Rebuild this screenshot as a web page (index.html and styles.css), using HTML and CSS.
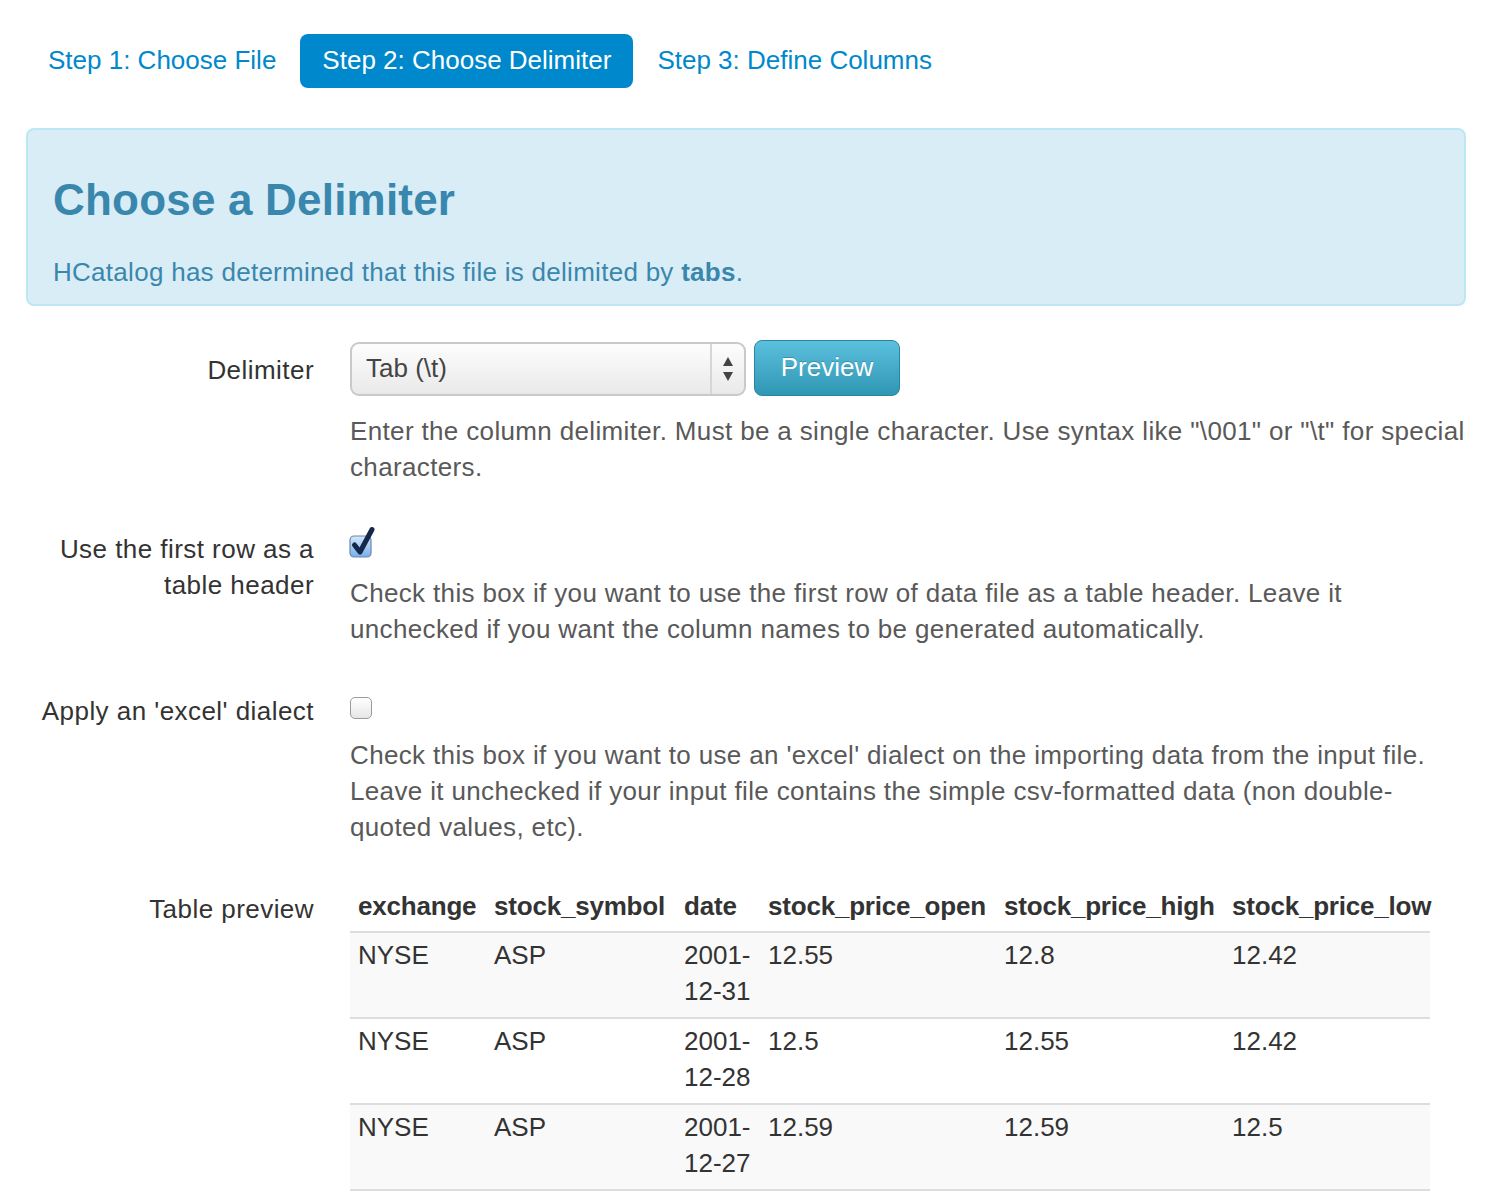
FILE: index.html
```html
<!DOCTYPE html>
<html lang="en">
<head>
<meta charset="utf-8">
<title>Choose a Delimiter</title>
<link rel="stylesheet" href="styles.css">
</head>
<body>
<div class="page">
  <ul class="steps">
    <li><a class="step">Step 1: Choose File</a></li>
    <li><a class="step active">Step 2: Choose Delimiter</a></li>
    <li><a class="step">Step 3: Define Columns</a></li>
  </ul>

  <div class="alert">
    <h1>Choose a Delimiter</h1>
    <p>HCatalog has determined that this file is delimited by <b>tabs</b>.</p>
  </div>

  <div class="form">
    <div class="group">
      <div class="label">Delimiter</div>
      <div class="controls">
        <div class="inline">
          <div class="select">
            <span class="select-text">Tab (\t)</span>
            <span class="arrows">
              <svg width="14" height="28" viewBox="0 0 14 28"><path d="M7 2 L12 11 L2 11 Z" fill="#444"/><path d="M2 17 L12 17 L7 26 Z" fill="#444"/></svg>
            </span>
          </div>
          <button class="btn">Preview</button>
        </div>
        <p class="help">Enter the column delimiter. Must be a single character. Use syntax like "\001" or "\t" for special characters.</p>
      </div>
    </div>

    <div class="group">
      <div class="label">Use the first row as a table header</div>
      <div class="controls">
        <div class="check-line">
          <svg class="checkbox checked" width="30" height="34" viewBox="0 0 30 34">
            <defs>
              <linearGradient id="cb" x1="0" y1="0" x2="0" y2="1">
                <stop offset="0" stop-color="#d3e7fc"/>
                <stop offset="1" stop-color="#78aeea"/>
              </linearGradient>
            </defs>
            <rect x="1" y="10" width="21" height="21" rx="4" fill="url(#cb)" stroke="#6a88ae" stroke-width="1.2"/>
            <path d="M5.5 19 L11 26 L23 3.5" fill="none" stroke="#13284a" stroke-width="5" stroke-linecap="round" stroke-linejoin="round"/>
          </svg>
        </div>
        <p class="help">Check this box if you want to use the first row of data file as a table header. Leave it unchecked if you want the column names to be generated automatically.</p>
      </div>
    </div>

    <div class="group">
      <div class="label">Apply an 'excel' dialect</div>
      <div class="controls">
        <div class="check-line">
          <span class="checkbox unchecked"></span>
        </div>
        <p class="help">Check this box if you want to use an 'excel' dialect on the importing data from the input file. Leave it unchecked if your input file contains the simple csv-formatted data (non double-quoted values, etc).</p>
      </div>
    </div>

    <div class="group">
      <div class="label">Table preview</div>
      <div class="controls">
        <table class="preview">
          <colgroup>
            <col class="c1"><col class="c2"><col class="c3"><col class="c4"><col class="c5"><col class="c6">
          </colgroup>
          <thead>
            <tr><th>exchange</th><th>stock_symbol</th><th>date</th><th>stock_price_open</th><th>stock_price_high</th><th>stock_price_low</th></tr>
          </thead>
          <tbody>
            <tr><td>NYSE</td><td>ASP</td><td>2001-12-31</td><td>12.55</td><td>12.8</td><td>12.42</td></tr>
            <tr><td>NYSE</td><td>ASP</td><td>2001-12-28</td><td>12.5</td><td>12.55</td><td>12.42</td></tr>
            <tr><td>NYSE</td><td>ASP</td><td>2001-12-27</td><td>12.59</td><td>12.59</td><td>12.5</td></tr>
          </tbody>
        </table>
      </div>
    </div>
  </div>
</div>
</body>
</html>
```

FILE: styles.css
```css
* { box-sizing: border-box; }
html, body { margin: 0; padding: 0; background: #fff; }
body {
  font-family: "Liberation Sans", Arial, sans-serif;
  font-size: 26px;
  line-height: 36px;
  color: #333;
}
.page {
  padding: 34px 26px 0 26px;
  width: 1492px;
  overflow: hidden;
}

/* steps */
.steps {
  list-style: none;
  margin: 0 0 40px 0;
  padding: 0;
  display: flex;
  gap: 2px;
}
.step {
  display: block;
  padding: 8px 22px 10px 22px;
  line-height: 36px;
  color: #0088cc;
  border-radius: 8px;
  text-decoration: none;
}
.step.active {
  background: #0088cc;
  color: #fff;
}

/* alert */
.alert {
  background: #d9edf7;
  border: 2px solid #bce8f1;
  border-radius: 8px;
  color: #3a87ad;
  padding: 44px 24px 14px 25px;
  margin-bottom: 36px;
}
.alert h1 {
  margin: 0 0 28px 0;
  font-size: 44px;
  line-height: 52px;
  font-weight: bold;
  letter-spacing: 0.2px;
}
.alert p { margin: 0; letter-spacing: 0.28px; }
.alert b { font-weight: bold; }

/* form */
.form { display: flex; flex-direction: column; }
.group {
  display: grid;
  grid-template-columns: 288px 1fr;
  column-gap: 36px;
  margin-bottom: 36px;
}
.label {
  text-align: right;
  padding-top: 10px;
  padding-left: 8px;
  color: #333;
  letter-spacing: 0.45px;
}
.controls { min-width: 0; margin-right: -2px; }
.inline { display: flex; align-items: center; gap: 8px; height: 54px; }
.select {
  width: 396px;
  height: 54px;
  border: 2px solid #c9c9c9;
  border-radius: 9px;
  background: linear-gradient(#fdfdfd, #e9e9e9);
  display: flex;
  align-items: center;
  justify-content: space-between;
  color: #444;
}
.select-text { padding-left: 14px; margin-top: -3px; }
.arrows {
  width: 34px;
  height: 100%;
  border-left: 2px solid #d6d6d6;
  display: flex;
  align-items: center;
  justify-content: center;
}
.btn {
  font: inherit;
  height: 56px;
  width: 146px;
  margin-top: -2px;
  color: #fff;
  background: linear-gradient(#5bc0de, #2f96b4);
  border: 1px solid #2a85a0;
  border-radius: 8px;
  padding: 0 0 3px 0;
  text-shadow: 0 -1px 0 rgba(0,0,0,0.2);
}
.help {
  margin: 17px 0 0 0;
  color: #595959;
  letter-spacing: 0.35px;
}
.check-line {
  height: 36px;
  position: relative;
}
.checkbox.checked {
  position: absolute;
  left: -1px;
  top: 5px;
}
.checkbox.unchecked {
  position: absolute;
  left: 0;
  top: 14px;
  width: 22px;
  height: 22px;
  border: 1.5px solid #9a9a9a;
  border-radius: 5px;
  background: linear-gradient(#ffffff, #e6e6e6);
}
.group .check-line + .help { margin-top: 18px; }

/* table */
.preview {
  width: 1080px;
  border-collapse: collapse;
  table-layout: fixed;
}
.c1 { width: 136px; }
.c2 { width: 190px; }
.c3 { width: 84px; }
.c4 { width: 236px; }
.c5 { width: 228px; }
.c6 { width: 206px; }
.preview th {
  text-align: left;
  font-weight: bold;
  padding: 7px 8px 7px 8px;
  border-bottom: 2px solid #ddd;
  white-space: nowrap;
  letter-spacing: -0.2px;
}
.preview td {
  padding: 4px 8px 8px 8px;
  border-top: 2px solid #ddd;
  vertical-align: top;
}
.preview tbody tr:first-child td { border-top: 0; }
.preview tbody tr:nth-child(odd) td { background: #f9f9f9; }
.preview tbody tr:last-child td { border-bottom: 2px solid #ddd; }
```
